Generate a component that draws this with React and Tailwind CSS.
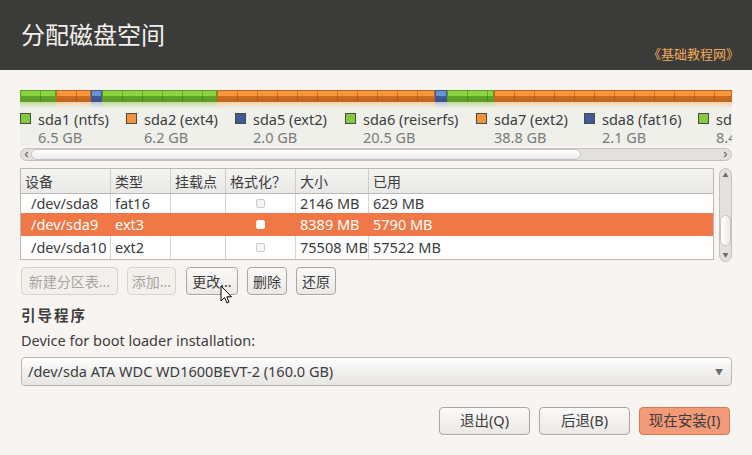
import { ChevronLeft, ChevronRight } from "lucide-react";

const font = { fontFamily: '"Noto Sans", "Noto Sans CJK SC", sans-serif' };

const segments = [
  { w: 36, c: "green" },
  { w: 35, c: "orange" },
  { w: 11, c: "blue" },
  { w: 115, c: "green" },
  { w: 218, c: "orange" },
  { w: 12, c: "blue" },
  { w: 47, c: "green" },
  { w: 238, c: "orange" },
];

const segClass = {
  green:
    "border-[#5a9a28] bg-[image:repeating-linear-gradient(to_right,transparent_0,transparent_19px,rgba(40,80,10,0.35)_19px,rgba(40,80,10,0.35)_20px),linear-gradient(to_bottom,#8cd340_0,#8cd340_50%,#62a329_50%,#5c9c25_100%)]",
  orange:
    "border-[#c4641c] bg-[image:repeating-linear-gradient(to_right,transparent_0,transparent_19px,rgba(120,50,0,0.35)_19px,rgba(120,50,0,0.35)_20px),linear-gradient(to_bottom,#f7963a_0,#f7963a_50%,#cf6d20_50%,#c4661c_100%)]",
  blue:
    "border-[#3c5590] bg-[image:linear-gradient(to_bottom,#6494d2_0,#6494d2_50%,#42599a_50%,#3c5590_100%)]",
};

const reflClass = {
  green: "bg-[linear-gradient(to_bottom,#c2d9a0,#eef0e6)]",
  orange: "bg-[linear-gradient(to_bottom,#f0cfae,#f2ede4)]",
  blue: "bg-[linear-gradient(to_bottom,#bcc2d6,#eceef0)]",
};

const legend = [
  { w: "w-[106px]", name: "sda1 (ntfs)", size: "6.5 GB", fill: "bg-[#84cc3c]" },
  { w: "w-[109px]", name: "sda2 (ext4)", size: "6.2 GB", fill: "bg-[#f2943a]" },
  { w: "w-[110px]", name: "sda5 (ext2)", size: "2.0 GB", fill: "bg-[#3f5c98]" },
  { w: "w-[131px]", name: "sda6 (reiserfs)", size: "20.5 GB", fill: "bg-[#84cc3c]" },
  { w: "w-[108px]", name: "sda7 (ext2)", size: "38.8 GB", fill: "bg-[#f2943a]" },
  { w: "w-[114px]", name: "sda8 (fat16)", size: "2.1 GB", fill: "bg-[#3f5c98]" },
  { w: "w-[80px]", name: "sda9 (ext3)", size: "8.4 GB", fill: "bg-[#84cc3c]" },
];

const cols = ["w-[90px]", "w-[60px]", "w-[55px]", "w-[70px]", "w-[73px]", "flex-1"];
const heads = ["设备", "类型", "挂载点", "格式化？", "大小", "已用"];

const rows = [
  { dev: "/dev/sda8", type: "fat16", size: "2146 MB", used: "629 MB", h: "h-[19px]", sel: false },
  { dev: "/dev/sda9", type: "ext3", size: "8389 MB", used: "5790 MB", h: "h-[23px]", sel: true },
  { dev: "/dev/sda10", type: "ext2", size: "75508 MB", used: "57522 MB", h: "h-[23px]", sel: false },
];

const btnOn =
  "border-[#aaa49f] bg-[linear-gradient(to_bottom,#fbfaf9,#ebe8e5)] text-[#3c3c3c] shadow-[0_1px_0_#fff]";

function Btn({ children, disabled, w }) {
  return (
    <div
      className={`${w} flex h-[28px] items-center justify-center rounded-[4px] border text-[14px] ${
        disabled ? "border-[#d8d3cf] bg-[#f3efeb] text-[#a9a49f]" : btnOn
      }`}
    >
      {children}
    </div>
  );
}

export default function App() {
  return (
    <div className="relative h-[455px] w-[752px] overflow-hidden bg-[#f8f4f1]" style={font}>
      {/* Header */}
      <div className="flex h-[70px] items-start justify-between bg-[#3b3c39] pl-[21px] pr-[13px]">
        <h1 className="mt-[19px] text-[24px] leading-[32px] text-[#f2f0ec]">分配磁盘空间</h1>
        <span className="mt-[44px] text-[13px] leading-[20px] text-[#f2aa5a]">《基础教程网》</span>
      </div>

      <div className="px-5">
        {/* Partition bar */}
        <div className="mt-[20px] w-[712px]">
          <div className="flex h-[12px]">
            {segments.map((s, i) => (
              <div key={i} style={{ width: s.w }} className={`h-full border ${segClass[s.c]}`} />
            ))}
          </div>
          <div className="flex h-[6px]">
            {segments.map((s, i) => (
              <div key={i} style={{ width: s.w }} className={`h-full ${reflClass[s.c]}`} />
            ))}
          </div>
          <div className="flex h-[38px] overflow-hidden bg-[#f0f0eb] pt-[2px]">
            {legend.map((l) => (
              <div key={l.name} className={`${l.w} flex shrink-0 gap-[7px]`}>
                <span className={`mt-[3px] h-[11px] w-[11px] shrink-0 border border-[#4a4a48] ${l.fill}`} />
                <div className="whitespace-nowrap">
                  <div className="text-[14.5px] leading-[18px] text-[#3c3c3c]">{l.name}</div>
                  <div className="text-[14.5px] leading-[18px] text-[#7a7a78]">{l.size}</div>
                </div>
              </div>
            ))}
          </div>
        </div>

        {/* Horizontal scrollbar */}
        <div className="mt-[2px] flex h-[13px] w-[712px] items-center rounded-full border border-[#c5c0bb] bg-[#e3e1de]">
          <ChevronLeft size={9} strokeWidth={3} className="ml-[1px] text-[#6a6a6a]" />
          <div className="h-[11px] w-[550px] rounded-full border border-[#c8c3be] bg-[linear-gradient(to_bottom,#ffffff,#ecebea)]" />
          <div className="flex-1" />
          <ChevronRight size={9} strokeWidth={3} className="mr-[1px] text-[#6a6a6a]" />
        </div>

        {/* Table + vertical scrollbar */}
        <div className="mt-[7px] flex w-[712px] items-start gap-[5px]">
          <div className="w-[694px] border border-[#bdb8b3] bg-white">
            <div className="flex h-[25px] border-b border-[#bdb8b3] bg-[linear-gradient(to_bottom,#f4f4f2,#e9e8e6)] font-['Noto_Sans_CJK_SC',sans-serif]">
              {heads.map((h, i) => (
                <div
                  key={h}
                  className={`${cols[i]} flex items-center border-r border-[#d0cdc9] pl-[4px] text-[14px] text-[#3c3c3c] last:border-r-0`}
                >
                  {h}
                </div>
              ))}
            </div>
            {rows.map((r) => {
              const bc = r.sel ? "border-[#f07746]" : "border-[#d8d5d1]";
              return (
                <div
                  key={r.dev}
                  className={`flex ${r.h} text-[14.5px] ${r.sel ? "bg-[#f07746] text-white" : "text-[#3c3c3c]"}`}
                >
                  <div className={`${cols[0]} flex items-center border-r pl-[10px] ${bc}`}>{r.dev}</div>
                  <div className={`${cols[1]} flex items-center border-r pl-[4px] ${bc}`}>{r.type}</div>
                  <div className={`${cols[2]} border-r ${bc}`} />
                  <div className={`${cols[3]} flex items-center justify-center border-r ${bc}`}>
                    <span
                      className={`h-[9px] w-[9px] rounded-[2px] border ${
                        r.sel ? "border-white bg-white" : "border-[#cfcbc7] bg-[#f6f5f3]"
                      }`}
                    />
                  </div>
                  <div className={`${cols[4]} flex items-center border-r pl-[4px] ${bc}`}>{r.size}</div>
                  <div className="flex flex-1 items-center pl-[4px]">{r.used}</div>
                </div>
              );
            })}
          </div>
          <div className="flex h-[94px] w-[13px] flex-col items-center rounded-full border border-[#c5c0bb] bg-[#e3e1de] py-[2px]">
            <span className="text-[6px] leading-[8px] text-[#6a6a6a]">▲</span>
            <div className="mt-[36px] h-[31px] w-[11px] rounded-full border border-[#c8c3be] bg-[linear-gradient(to_right,#ffffff,#ecebea)]" />
            <div className="flex-1" />
            <span className="text-[6px] leading-[8px] text-[#6a6a6a]">▼</span>
          </div>
        </div>

        {/* Partition buttons */}
        <div className="mt-[5px] flex gap-[9px] pl-[1px]">
          <Btn disabled w="w-[97px]">新建分区表...</Btn>
          <Btn disabled w="w-[49px]">添加...</Btn>
          <div className="ml-[1px]">
            <Btn w="w-[52px]">更改...</Btn>
          </div>
          <Btn w="w-[40px]">删除</Btn>
          <Btn w="w-[40px]">还原</Btn>
        </div>

        {/* Boot loader */}
        <div className="mt-[10px] pl-[1px] text-[14.5px] font-bold leading-[20px] tracking-[2px] text-[#3c3c3c]">引导程序</div>
        <div className="mt-[5px] pl-[1px] text-[14.5px] leading-[20px] text-[#3c3c3c]">Device for boot loader installation:</div>
        <div className="mt-[7px] ml-[1px] flex h-[29px] w-[711px] items-center justify-between rounded-[4px] border border-[#bcb6b1] bg-[linear-gradient(to_bottom,#ffffff,#f2f1ef_45%,#e8e6e3)] pl-[6px] pr-[8px]">
          <span className="text-[14.5px] text-[#3c3c3c]">/dev/sda ATA WDC WD1600BEVT-2 (160.0 GB)</span>
          <span className="text-[8px] text-[#6a6a6a]">▼</span>
        </div>

        {/* Bottom buttons */}
        <div className="mt-[21px] flex justify-end gap-[9px] pr-[2px]">
          <div className={`flex h-[28px] w-[91px] items-center justify-center rounded-[4px] border text-[14.5px] ${btnOn}`}>
            退出(Q)
          </div>
          <div className={`flex h-[28px] w-[91px] items-center justify-center rounded-[4px] border text-[14.5px] ${btnOn}`}>
            后退(B)
          </div>
          <div className="flex h-[28px] w-[91px] items-center justify-center rounded-[4px] border border-[#d5785a] bg-[#f39a78] text-[14.5px] text-[#3c3c3c]">
            现在安装(I)
          </div>
        </div>
      </div>

      {/* Mouse cursor */}
      <svg className="absolute left-[220px] top-[285px]" width="14" height="20" viewBox="0 0 14 20">
        <path d="M1 1 L1 16 L4.5 12.5 L7 18 L9 17 L6.8 11.8 L11.5 11.8 Z" fill="#fff" stroke="#000" strokeWidth="1" strokeLinejoin="round" />
      </svg>
    </div>
  );
}
